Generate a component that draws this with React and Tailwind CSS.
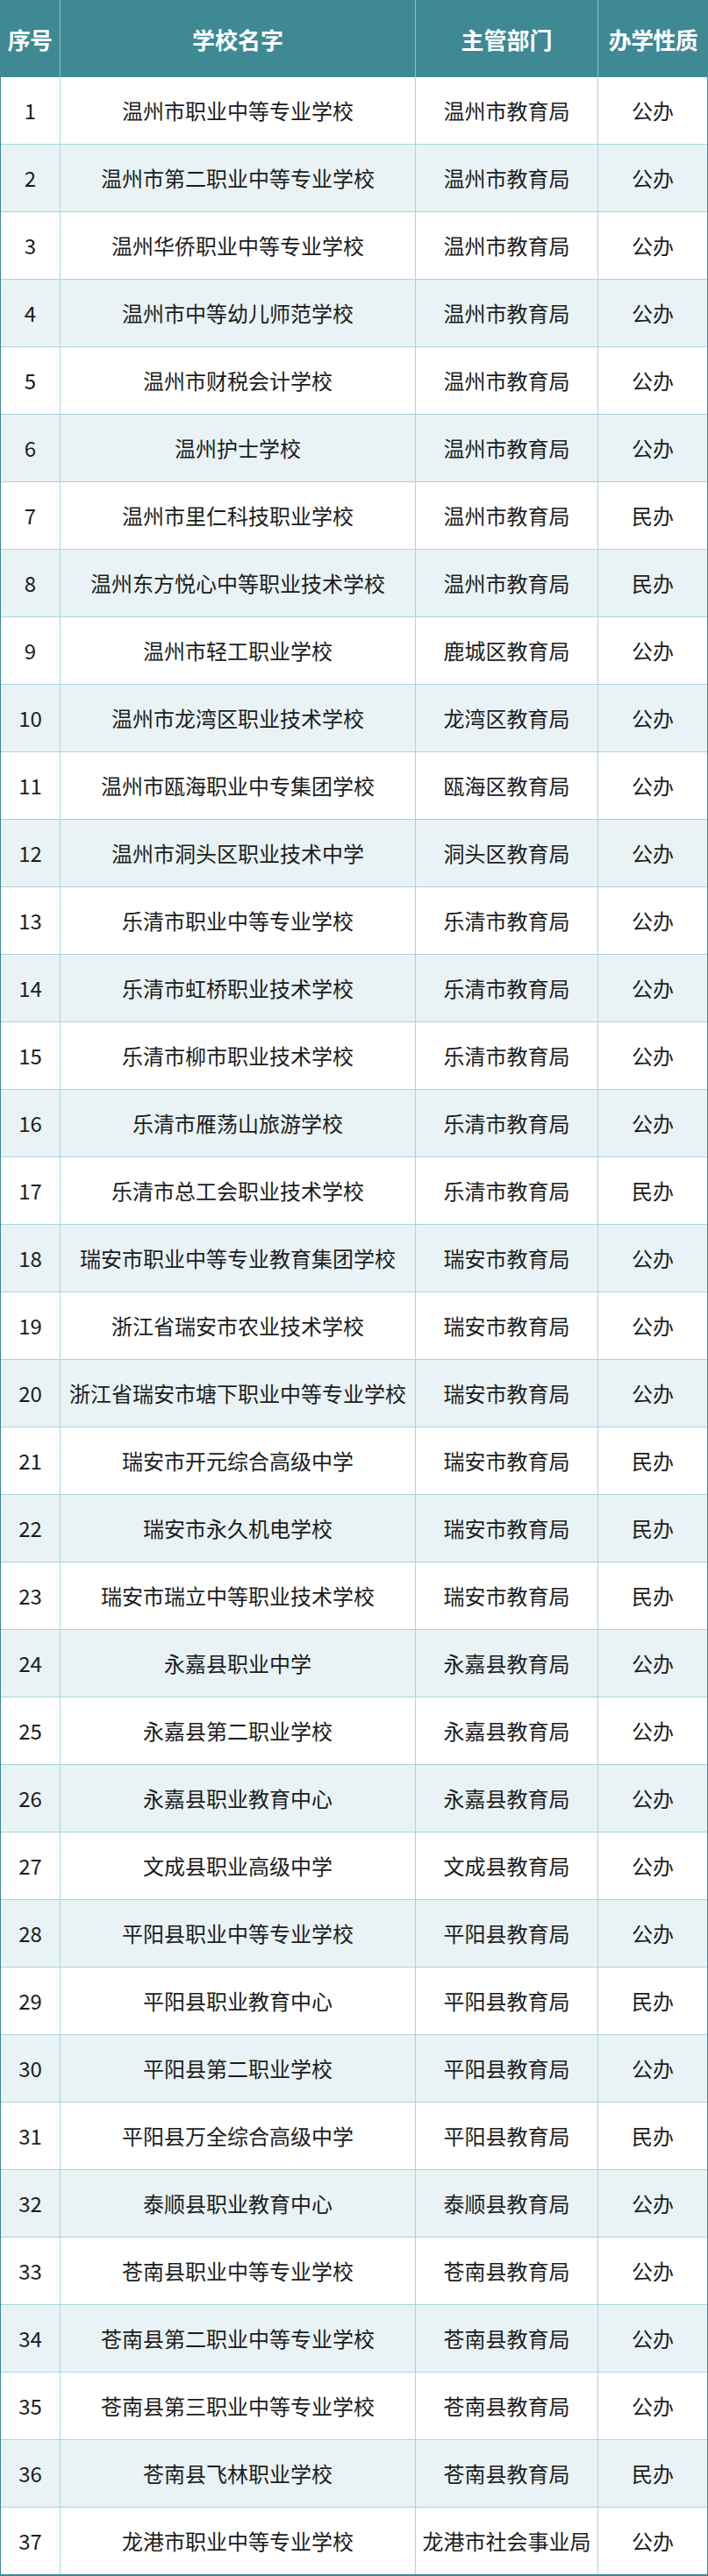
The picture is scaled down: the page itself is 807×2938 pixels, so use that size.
import React from "react";

const rows = [
  ["温州市职业中等专业学校", "温州市教育局", "公办"],
  ["温州市第二职业中等专业学校", "温州市教育局", "公办"],
  ["温州华侨职业中等专业学校", "温州市教育局", "公办"],
  ["温州市中等幼儿师范学校", "温州市教育局", "公办"],
  ["温州市财税会计学校", "温州市教育局", "公办"],
  ["温州护士学校", "温州市教育局", "公办"],
  ["温州市里仁科技职业学校", "温州市教育局", "民办"],
  ["温州东方悦心中等职业技术学校", "温州市教育局", "民办"],
  ["温州市轻工职业学校", "鹿城区教育局", "公办"],
  ["温州市龙湾区职业技术学校", "龙湾区教育局", "公办"],
  ["温州市瓯海职业中专集团学校", "瓯海区教育局", "公办"],
  ["温州市洞头区职业技术中学", "洞头区教育局", "公办"],
  ["乐清市职业中等专业学校", "乐清市教育局", "公办"],
  ["乐清市虹桥职业技术学校", "乐清市教育局", "公办"],
  ["乐清市柳市职业技术学校", "乐清市教育局", "公办"],
  ["乐清市雁荡山旅游学校", "乐清市教育局", "公办"],
  ["乐清市总工会职业技术学校", "乐清市教育局", "民办"],
  ["瑞安市职业中等专业教育集团学校", "瑞安市教育局", "公办"],
  ["浙江省瑞安市农业技术学校", "瑞安市教育局", "公办"],
  ["浙江省瑞安市塘下职业中等专业学校", "瑞安市教育局", "公办"],
  ["瑞安市开元综合高级中学", "瑞安市教育局", "民办"],
  ["瑞安市永久机电学校", "瑞安市教育局", "民办"],
  ["瑞安市瑞立中等职业技术学校", "瑞安市教育局", "民办"],
  ["永嘉县职业中学", "永嘉县教育局", "公办"],
  ["永嘉县第二职业学校", "永嘉县教育局", "公办"],
  ["永嘉县职业教育中心", "永嘉县教育局", "公办"],
  ["文成县职业高级中学", "文成县教育局", "公办"],
  ["平阳县职业中等专业学校", "平阳县教育局", "公办"],
  ["平阳县职业教育中心", "平阳县教育局", "民办"],
  ["平阳县第二职业学校", "平阳县教育局", "公办"],
  ["平阳县万全综合高级中学", "平阳县教育局", "民办"],
  ["泰顺县职业教育中心", "泰顺县教育局", "公办"],
  ["苍南县职业中等专业学校", "苍南县教育局", "公办"],
  ["苍南县第二职业中等专业学校", "苍南县教育局", "公办"],
  ["苍南县第三职业中等专业学校", "苍南县教育局", "公办"],
  ["苍南县飞林职业学校", "苍南县教育局", "民办"],
  ["龙港市职业中等专业学校", "龙港市社会事业局", "公办"],
];

const App = () => {
  return (
    <div className="w-[807px] bg-white font-['Noto_Sans_CJK_SC','Noto_Sans',sans-serif] text-[#1c1c1c]">
      <div className="grid h-[88px] grid-cols-[69px_405px_208px_125px] bg-[#3e8994] text-[26px] font-bold text-white">
        <div className="flex items-center justify-center border-r border-[#8fbfc6] tracking-tight">序号</div>
        <div className="flex items-center justify-center border-r border-[#8fbfc6]">学校名字</div>
        <div className="flex items-center justify-center border-r border-[#8fbfc6]">主管部门</div>
        <div className="flex items-center justify-center tracking-tight">办学性质</div>
      </div>
      <div className="border-x border-b-2 border-[#3e8994]">
        {rows.map((r, i) => (
          <div
            key={i}
            className={
              "grid h-[77px] grid-cols-[68px_405px_208px_1fr] border-b border-[#a9d4dc] text-[24px] last:h-[76px] last:border-b-0 " +
              (i % 2 === 1 ? "bg-[#e9f3f5]" : "bg-white")
            }
          >
            <div className="flex items-center justify-center border-r border-[#a9d4dc]">{i + 1}</div>
            <div className="flex items-center justify-center whitespace-nowrap border-r border-[#a9d4dc]">{r[0]}</div>
            <div className="flex items-center justify-center whitespace-nowrap border-r border-[#a9d4dc]">{r[1]}</div>
            <div className="flex items-center justify-center">{r[2]}</div>
          </div>
        ))}
      </div>
    </div>
  );
};

export default App;
